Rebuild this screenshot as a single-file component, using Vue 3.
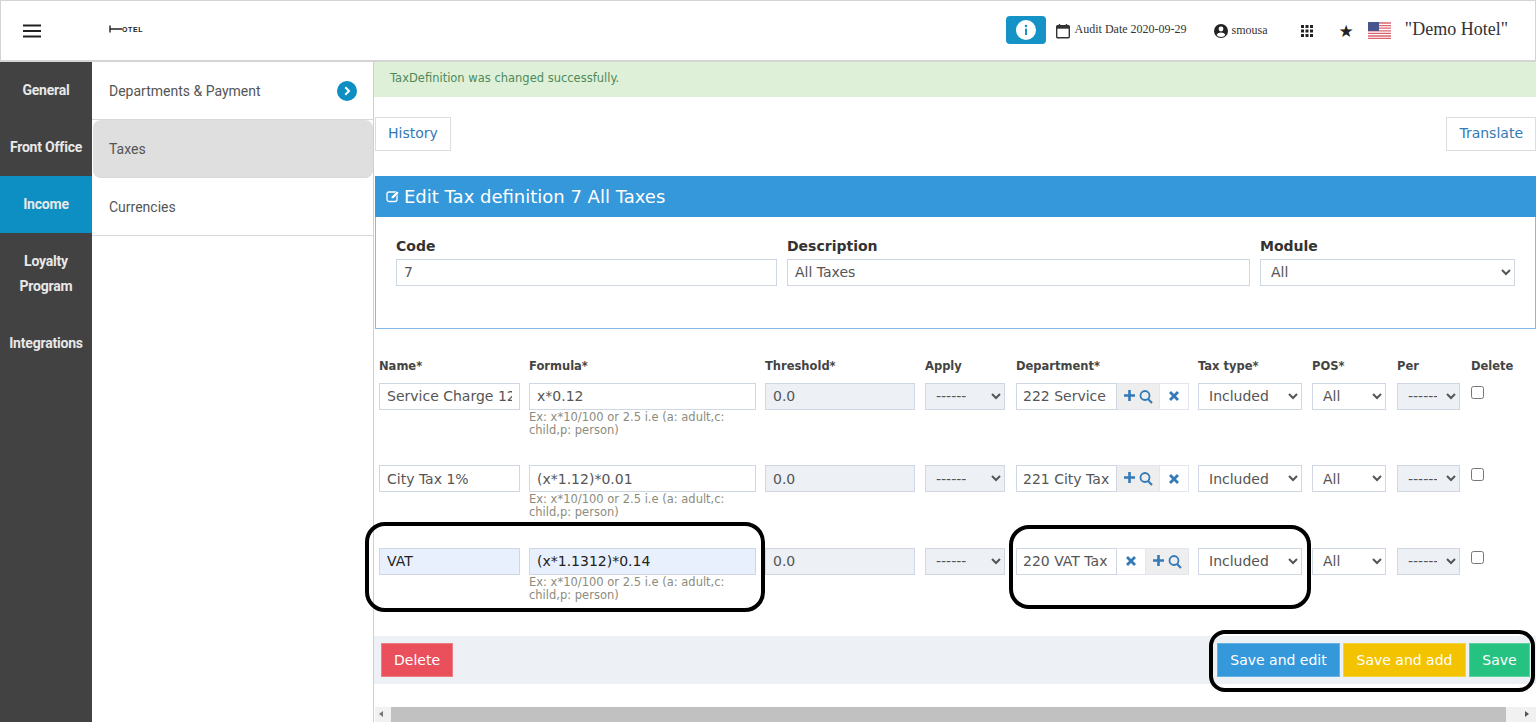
<template>
  <div class="page">
    <header class="topbar">
      <button class="menu-btn" aria-label="menu">
        <svg width="20" height="14" viewBox="0 0 20 14"><path d="M1 1.5h18M1 7h18M1 12.5h18" stroke="#222" stroke-width="2" fill="none" /></svg>
      </button>
      <div class="logo">
        <svg width="13" height="8" viewBox="0 0 13 8"><path d="M1 0.5v7M1 4h12" stroke="#222" stroke-width="1.4" fill="none" /></svg>
        <span>OTEL</span>
      </div>
      <div class="top-right">
        <button class="info-btn" aria-label="info">
          <svg width="20" height="20" viewBox="0 0 20 20">
            <circle cx="10" cy="10" r="10" fill="#fff" />
            <circle cx="10" cy="6" r="1.3" fill="#1593c6" />
            <rect x="9" y="8.6" width="2" height="6.4" fill="#1593c6" />
          </svg>
        </button>
        <svg class="cal" width="16" height="16" viewBox="0 0 16 16">
          <rect x="1.7" y="2.7" width="12.6" height="12" rx="1" fill="none" stroke="#333" stroke-width="1.4" />
          <rect x="1.7" y="2.7" width="12.6" height="3" fill="#333" />
          <path d="M4.5 1v2M11.5 1v2" stroke="#333" stroke-width="1.4" />
        </svg>
        <span class="audit">Audit Date 2020-09-29</span>
        <svg class="user" width="16" height="16" viewBox="0 0 16 16">
          <circle cx="8" cy="8" r="7" fill="#222" />
          <circle cx="8" cy="6" r="2.4" fill="#fff" />
          <path d="M3.6 12c1-1.8 2.6-2.5 4.4-2.5s3.4.7 4.4 2.5c-1.100 1.200-2.700 1.900-4.400 1.900S4.700 13.200 3.600 12z" fill="#fff" />
        </svg>
        <span class="username">smousa</span>
        <svg class="apps" width="12" height="12" viewBox="0 0 12 12" fill="#222">
          <template v-for="y in [0, 4.500, 9]" :key="y">
            <rect v-for="x in [0, 4.500, 9]" :key="x" :x="x" :y="y" width="3" height="3" />
          </template>
        </svg>
        <span class="star">★</span>
        <svg class="flag" width="23" height="17" viewBox="0 0 23 17">
          <rect width="23" height="17" fill="#fff" />
          <path d="M0 1h23M0 3.600h23M0 6.200h23M0 8.800h23M0 11.400h23M0 14h23M0 16.400h23" stroke="#d9656f" stroke-width="1.300" />
          <rect width="11" height="9" fill="#47568f" />
        </svg>
        <span class="hotel">"Demo Hotel"</span>
      </div>
    </header>

    <div class="body">
      <nav class="side-main">
        <div v-for="item in mainNav" :key="item" class="side-item" :class="{ active: item === 'Income' }">{{ item }}</div>
      </nav>
      <nav class="side-sub">
        <div v-for="item in subNav" :key="item" class="sub-item" :class="{ current: item === 'Taxes' }">
          <span>{{ item }}</span>
          <span v-if="item === 'Departments & Payment'" class="chevron">
            <svg width="10" height="10" viewBox="0 0 10 10"><path d="M3.300 1.300 7 5 3.300 8.700" stroke="#fff" stroke-width="2" fill="none" /></svg>
          </span>
        </div>
      </nav>

      <main class="content">
        <div class="alert">TaxDefinition was changed successfully.</div>
        <div class="toolbar">
          <a class="plain-btn">History</a>
          <a class="plain-btn">Translate</a>
        </div>

        <section class="panel">
          <h2 class="panel-title">
            <svg width="14" height="14" viewBox="0 0 14 14">
              <rect x="1" y="3" width="10" height="9.500" rx="2" fill="none" stroke="#fff" stroke-width="1.300" />
              <path d="M5 9.500 5.500 7.500 11 2l2 2-5.500 5.500z" fill="#fff" stroke="#3498db" stroke-width=".6" />
            </svg>
            Edit Tax definition 7 All Taxes
          </h2>
          <div class="panel-body">
            <label class="fld code">Code<input value="7" /></label>
            <label class="fld desc">Description<input value="All Taxes" /></label>
            <label class="fld module">Module<select><option>All</option></select></label>
          </div>
        </section>

        <div class="tax-grid heads">
          <div v-for="h in heads" :key="h">{{ h }}</div>
        </div>

        <div v-for="row in rows" :key="row.name" class="tax-grid tax-row">
          <div><input :class="{ filled: row.filled }" :value="row.name" /></div>
          <div>
            <input :class="{ filled: row.filled }" :value="row.formula" />
            <div class="hint">Ex: x*10/100 or 2.5 i.e (a: adult,c: child,p: person)</div>
          </div>
          <div><input class="readonly" value="0.0" readonly /></div>
          <div><select class="readonly"><option>------</option></select></div>
          <div class="dept">
            <input :value="row.dept" />
            <template v-if="row.swapped">
              <span class="addon clear"><svg width="12" height="12" viewBox="0 0 12 12"><path :d="crossPath" stroke="#337ab7" stroke-width="2.800" /></svg></span>
              <span class="addon find"><svg width="31" height="15" viewBox="0 0 31 15"><path :d="plusPath" stroke="#337ab7" stroke-width="2.600" /><circle cx="22" cy="6.500" r="4.500" fill="none" stroke="#337ab7" stroke-width="1.800" /><path d="m25 10 4 4" stroke="#337ab7" stroke-width="2.200" /></svg></span>
            </template>
            <template v-else>
              <span class="addon find"><svg width="31" height="15" viewBox="0 0 31 15"><path :d="plusPath" stroke="#337ab7" stroke-width="2.600" /><circle cx="22" cy="6.500" r="4.500" fill="none" stroke="#337ab7" stroke-width="1.800" /><path d="m25 10 4 4" stroke="#337ab7" stroke-width="2.200" /></svg></span>
              <span class="addon clear"><svg width="12" height="12" viewBox="0 0 12 12"><path :d="crossPath" stroke="#337ab7" stroke-width="2.800" /></svg></span>
            </template>
          </div>
          <div><select><option>Included</option></select></div>
          <div><select><option>All</option></select></div>
          <div><select class="readonly"><option>------</option></select></div>
          <div><input class="check" type="checkbox" /></div>
        </div>

        <div class="footer">
          <button class="btn red">Delete</button>
          <div class="save-group">
            <button class="btn blue">Save and edit</button>
            <button class="btn yellow">Save and add</button>
            <button class="btn green">Save</button>
          </div>
        </div>

        <div class="hscroll">
          <span class="arrow left"></span>
          <span class="thumb"></span>
          <span class="arrow right"></span>
        </div>
      </main>
    </div>

    <!-- hand drawn highlights on top of the screenshot -->
    <div class="mark mark-a"></div>
    <div class="mark mark-b"></div>
    <div class="mark mark-c"></div>
  </div>
</template>

<script setup>
const mainNav = ['General', 'Front Office', 'Income', 'Loyalty Program', 'Integrations']
const subNav = ['Departments & Payment', 'Taxes', 'Currencies']
const heads = ['Name*', 'Formula*', 'Threshold*', 'Apply', 'Department*', 'Tax type*', 'POS*', 'Per', 'Delete']

const plusPath = 'M1 6.500h11M6.500 1v11'
const crossPath = 'M2 2l8 8M10 2l-8 8'

const rows = [
  { name: 'Service Charge 12%', formula: 'x*0.12', dept: '222 Service' },
  { name: 'City Tax 1%', formula: '(x*1.12)*0.01', dept: '221 City Tax' },
  { name: 'VAT', formula: '(x*1.1312)*0.14', dept: '220 VAT Tax', filled: true, swapped: true }
]
</script>

<style>
html, body { margin: 0; overflow: hidden; background: #fff; }
</style>

<style scoped>
.page { position: relative; width: 1536px; height: 722px; overflow: hidden; font-family: "DejaVu Sans", sans-serif; color: #555; display: flex; flex-direction: column; }

.topbar { height: 62px; box-sizing: border-box; flex-shrink: 0; display: flex; align-items: center; border: 1px solid #d4d4d4; border-bottom-width: 2px; background: #fff; font-family: "Liberation Serif", serif; color: #333; }
.menu-btn { border: 0; background: none; padding: 0; margin-left: 21px; height: 14px; display: flex; }
.logo { margin-left: 67px; display: flex; align-items: center; font: bold 7px "Liberation Sans", sans-serif; color: #222; letter-spacing: .6px; margin-top: -3px; }
.top-right { margin-left: auto; display: flex; align-items: center; }
.info-btn { width: 40px; height: 28px; background: #1593c6; border: 0; border-radius: 4px; padding: 0; display: flex; align-items: center; justify-content: center; margin-top: -2px; }
.cal { margin-left: 9px; }
.audit { font-size: 12px; margin-left: 4px; margin-top: -2px; }
.user { margin-left: 26px; }
.username { font-size: 12px; margin-left: 3px; }
.apps { margin-left: 33px; }
.star { font-size: 17px; margin-left: 26px; color: #222; font-family: "DejaVu Sans", sans-serif; }
.flag { margin-left: 14px; }
.hotel { font-size: 18px; margin-left: 14px; margin-right: 27px; margin-top: -2px; }

.body { flex: 1; display: flex; min-height: 0; }
.side-main { width: 92px; flex-shrink: 0; background: #424242; }
.side-item { padding: 16px 4px; line-height: 25px; text-align: center; color: #e8e8e8; font: bold 14px/25px Roboto, sans-serif; letter-spacing: -.2px; }
.side-item.active { background: #0d8fc4; }
.side-sub { width: 282px; flex-shrink: 0; box-sizing: border-box; border-right: 1px solid #cfcfcf; background: #fff; }
.sub-item { height: 58px; box-sizing: border-box; padding: 0 16px 0 17px; display: flex; align-items: center; justify-content: space-between; border-bottom: 1px solid #d8d8d8; font: 14px Roboto, sans-serif; color: #555; }
.sub-item.current { background: #dfdfdf; border-radius: 8px; margin-left: 1px; padding-left: 16px; }
.chevron { width: 20px; height: 20px; border-radius: 50%; background: #0d8fc4; display: flex; align-items: center; justify-content: center; }

.content { flex: 1; min-width: 0; display: flex; flex-direction: column; }
.alert { height: 35px; box-sizing: border-box; padding: 9px 16px 0; background: #dff0d8; color: #4d8a5a; font-size: 11.500px; }
.toolbar { display: flex; justify-content: space-between; padding: 20px 0 25px 1px; }
.plain-btn { height: 34px; box-sizing: border-box; padding: 0 12px; border: 1px solid #ddd; color: #337ab7; font-size: 14px; line-height: 31px; }

.panel { margin-left: 1px; border: 1px solid #85b9e6; border-top: 0; height: 153px; box-sizing: border-box; }
.panel-title { margin: 0 -1px; height: 41px; background: #3498db; color: #fff; font-size: 18px; font-weight: 400; display: flex; align-items: center; gap: 4px; padding-left: 11px; }
.panel-body { padding: 21px 20px 0; display: flex; }
.fld { display: flex; flex-direction: column; gap: 5px; font-size: 14px; font-weight: 700; color: #333; margin-right: 10px; }
.fld.code { width: 381px; }
.fld.desc { width: 463px; }
.fld.module { width: 255px; margin-right: 0; }

input, select { width: 100%; height: 27px; box-sizing: border-box; border: 1px solid #cfd6e4; border-radius: 0; background-color: #fff; color: #555; font: 14px "DejaVu Sans", sans-serif; padding: 0 7px; outline: 0; display: block; }
select { padding: 0 6px; }
input.readonly, select.readonly { background-color: #edf0f5; }
input.filled { background: #e8f0fe; color: #222; }
input.check { width: 13px; height: 13px; padding: 0; margin: 3px 0 0; }

.tax-grid { display: grid; grid-template-columns: 150px 236px 160px 91px 182px 114px 85px 74px 50px; padding-left: 5px; }
.tax-grid > div:nth-child(1), .tax-grid > div:nth-child(2), .tax-grid > div:nth-child(5) { padding-right: 9px; }
.tax-grid > div:nth-child(3), .tax-grid > div:nth-child(6) { padding-right: 10px; }
.tax-grid > div:nth-child(4), .tax-grid > div:nth-child(7), .tax-grid > div:nth-child(8) { padding-right: 11px; }
.heads { margin-top: 29px; height: 25px; font-size: 11.500px; font-weight: 700; color: #444; line-height: 16px; }
.tax-row { height: 82.500px; }
.hint { font-size: 11.500px; line-height: 13px; color: #8c8c7e; margin-top: 1px; }
.dept { display: flex; height: 27px; }
.dept input { flex: 1; min-width: 0; padding: 0 6px; }
.addon { height: 27px; box-sizing: border-box; display: flex; align-items: center; justify-content: center; border: 1px solid #e3e6ec; border-left: 0; flex-shrink: 0; }
.addon.find { width: 43px; background: #eee; }
.addon.clear { width: 29px; background: #fff; }

.footer { margin-top: 6px; height: 48px; background: #edf0f5; display: flex; justify-content: space-between; align-items: center; padding: 0 6px 0 7px; flex-shrink: 0; }
.save-group { display: flex; gap: 3px; }
.btn { height: 34px; border: 1px solid rgba(255,255,255,.25); border-radius: 0; color: #fff; font: 14px "DejaVu Sans", sans-serif; padding: 0 12px; }
.red { background: #e9505c; }
.blue { background: #3498db; width: 123px; }
.yellow { background: #f4c300; width: 123px; }
.green { background: #26c281; width: 61px; }

.hscroll { margin-top: 23px; margin-left: 1px; height: 15px; background: #f1f1f1; display: flex; align-items: center; flex-shrink: 0; }
.thumb { flex: 1; height: 15px; background: #c1c1c1; }
.arrow { width: 16px; flex-shrink: 0; position: relative; height: 15px; }
.arrow.right { width: 30px; }
.arrow::after { content: ""; position: absolute; top: 4px; border: 3.500px solid transparent; }
.arrow.left::after { left: 1px; border-right: 4px solid #777; }
.arrow.right::after { right: 4px; border-left: 4px solid #555; }

.mark { position: absolute; border: 4px solid #000; box-sizing: border-box; pointer-events: none; }
.mark-a { left: 365px; top: 522px; width: 400px; height: 90px; border-radius: 20px; }
.mark-b { left: 1009px; top: 525px; width: 302px; height: 84px; border-radius: 20px; }
.mark-c { left: 1209px; top: 630px; width: 326px; height: 62px; border-radius: 16px; }
</style>
